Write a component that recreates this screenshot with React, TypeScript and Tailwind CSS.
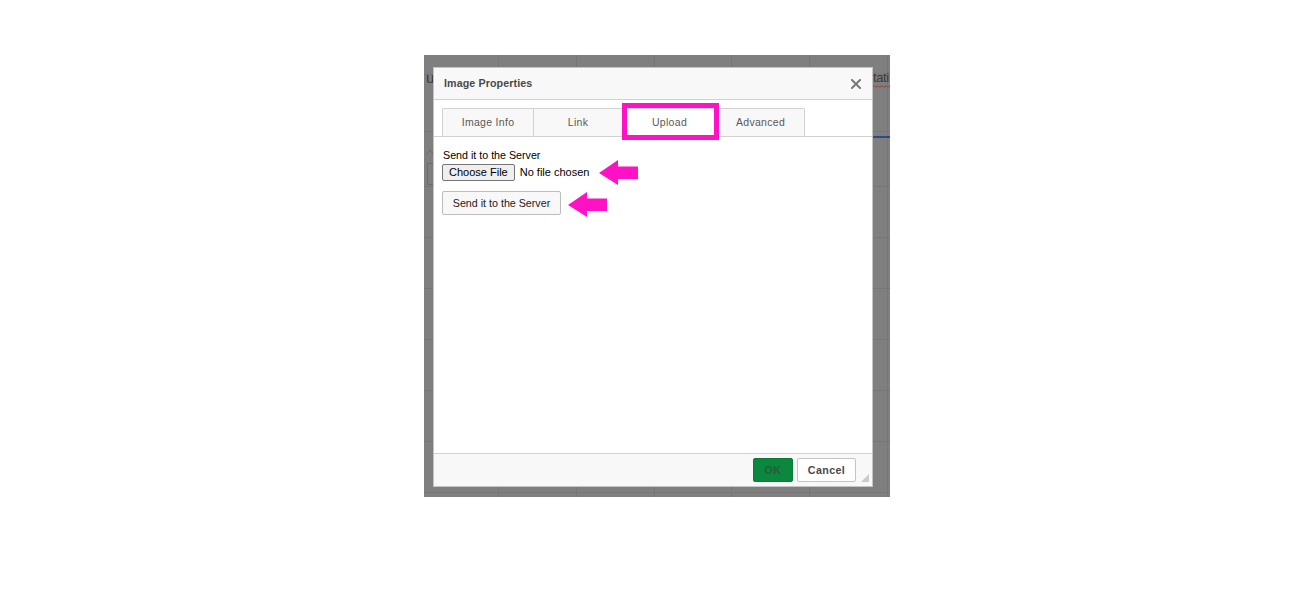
import React from "react";

function Arrow() {
  return (
    <svg width="39" height="25" viewBox="0 0 39 25" className="shrink-0">
      <polygon points="0,13 19,0 19,6.5 39,6.5 39,19 19,19 19,25" fill="#ff12c6" />
    </svg>
  );
}

function BackgroundPage() {
  const v = [74, 152, 230, 307, 385, 463];
  const h = [74, 131, 186, 237, 288, 339, 390, 441, 492];
  return (
    <svg className="absolute inset-0" width="466" height="442" viewBox="0 0 466 442">
      {v.map((x) => (
        <line key={"v" + x} x1={x + 0.5} y1="0" x2={x + 0.5} y2="442" stroke="#767676" strokeWidth="1" />
      ))}
      {h.map((y) => (
        <line key={"h" + y} x1="0" y1={y - 55 + 0.5} x2="466" y2={y - 55 + 0.5} stroke="#767676" strokeWidth="1" />
      ))}
      <rect x="3.5" y="108.5" width="10" height="21" fill="none" stroke="#6c6c6c" strokeWidth="1" />
      <path d="M3 99 L6 95 L9 99" fill="none" stroke="#6c6c6c" strokeWidth="1" />
      <rect x="449" y="81" width="17" height="2" fill="#2b4a8e" />
      <path d="M449 31.5 q1 -1.5 2 0 t2 0 t2 0 t2 0 t2 0 t2 0 t2 0 t2 0 t2 0" fill="none" stroke="#a04040" strokeWidth="1" />
    </svg>
  );
}

export default function App() {
  return (
    <div
      className="w-[1300px] h-[592px] bg-white pt-[55px] pl-[424px]"
      style={{ fontFamily: '"Liberation Sans", Arial, sans-serif' }}
    >
      <div className="relative w-[466px] h-[442px] bg-[#7f7f7f] pt-[12px] pl-[9px] overflow-hidden">
        <BackgroundPage />
        <span className="absolute left-[2px] top-[14px] text-[15px] leading-[18px] text-[#3a3a3a]">u</span>
        <span className="absolute left-[449px] top-[15px] text-[13px] leading-[16px] tracking-[-0.4px] text-[#3a3a3a]">tati</span>

        <div className="relative w-[440px] h-[420px] bg-white border border-[#c4c4c4] flex flex-col">
          {/* Title bar */}
          <div className="h-[32px] shrink-0 bg-[#f8f8f8] border-b border-[#d1d1d1] flex items-center justify-between pl-[10px] pr-[11px]">
            <span className="text-[10.7px] font-bold text-[#484848] tracking-[0.1px]">Image Properties</span>
            <svg width="10" height="10" viewBox="0 0 10 10">
              <path d="M1 1 L9 9 M9 1 L1 9" stroke="#7a7a7a" strokeWidth="2" strokeLinecap="square" />
            </svg>
          </div>

          {/* Tabs */}
          <div className="h-[37px] shrink-0 pt-[8px] px-[8px] border-b border-[#d1d1d1] flex">
            <div className="w-[91px] h-[28px] bg-[#f8f8f8] border-t border-l border-[#d1d1d1] rounded-tl-[2px] flex items-center justify-center text-[10.5px] text-[#595959] tracking-[0.3px]">
              Image Info
            </div>
            <div className="w-[89px] h-[28px] bg-[#f8f8f8] border-t border-l border-[#d1d1d1] flex items-center justify-center text-[10.5px] text-[#595959] tracking-[0.3px]">
              Link
            </div>
            <div className="relative w-[94px] h-[28px] bg-white border-t border-l border-[#d1d1d1] flex items-center justify-center text-[10.5px] text-[#595959] tracking-[0.3px]">
              Upload
              <div className="absolute left-[-1px] top-[-6px] right-[-3px] bottom-[-4px] border-[5px] border-[#ff12c6]" />
            </div>
            <div className="w-[89px] h-[28px] bg-[#f8f8f8] border-t border-l border-r border-[#d1d1d1] rounded-tr-[2px] flex items-center justify-center text-[10.5px] text-[#595959] tracking-[0.3px]">
              Advanced
            </div>
          </div>

          {/* Content */}
          <div className="flex-1 pt-[12px] px-[8px]">
            <div className="pl-[1px] text-[10.7px] leading-[13px] text-[#000]">Send it to the Server</div>
            <div className="mt-[1px] h-[18px] flex items-center">
              <span className="h-[17px] px-[6px] bg-[#efefef] border border-[#767676] rounded-[2px] flex items-center text-[11px] text-black">
                Choose File
              </span>
              <span className="ml-[5px] text-[11px] text-black">No file chosen</span>
              <span className="ml-[10px] -my-[4px] -mt-[3px]">
                <Arrow />
              </span>
            </div>
            <div className="mt-[10px] flex items-start">
              <span className="w-[119px] h-[24px] bg-[#f8f8f8] border border-[#bcbcbc] rounded-[2px] flex items-center justify-center text-[10.7px] text-[#222]">
                Send it to the Server
              </span>
              <span className="ml-[7px] mt-[1px]">
                <Arrow />
              </span>
            </div>
          </div>

          {/* Footer */}
          <div className="relative h-[33px] shrink-0 bg-[#f8f8f8] border-t border-[#d1d1d1] flex items-center justify-end pr-[16px] gap-[4px]">
            <span className="w-[40px] h-[24px] bg-[#09883e] border border-[#0a7a38] rounded-[2px] flex items-center justify-center text-[10.7px] font-bold text-[#2b5a39] tracking-[0.4px]">
              OK
            </span>
            <span className="w-[59px] h-[24px] bg-white border border-[#c4c4c4] rounded-[2px] flex items-center justify-center text-[10.7px] font-bold text-[#484848] tracking-[0.4px]">
              Cancel
            </span>
            <svg className="absolute right-[3px] bottom-[4px]" width="8" height="8" viewBox="0 0 8 8">
              <polygon points="8,0 8,8 0,8" fill="#cbcbcb" />
            </svg>
          </div>
        </div>
      </div>
    </div>
  );
}
